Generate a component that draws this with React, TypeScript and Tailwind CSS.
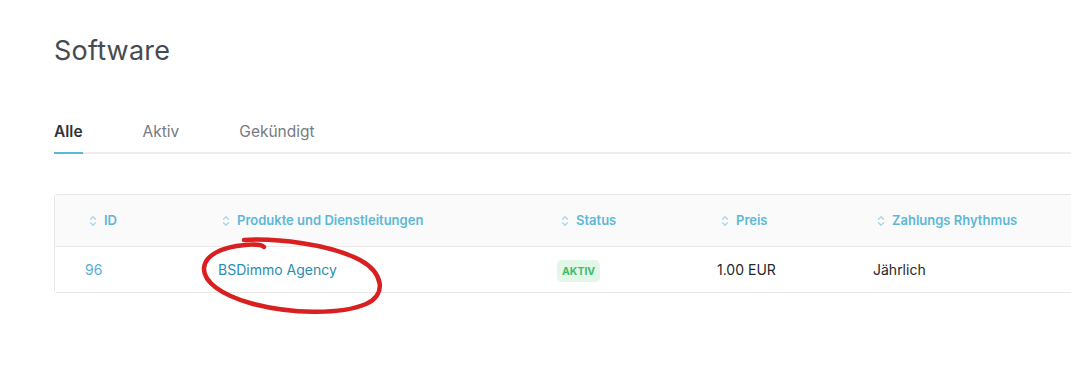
import React from "react";

const SortIcon = () => (
  <svg width="8" height="12" viewBox="0 0 8 12" fill="none" className="shrink-0">
    <path d="M1.5 4.2 L4 1.8 L6.5 4.2" stroke="#a9d6e8" strokeWidth="1.3" strokeLinecap="round" strokeLinejoin="round" />
    <path d="M1.5 7.8 L4 10.2 L6.5 7.8" stroke="#a9d6e8" strokeWidth="1.3" strokeLinecap="round" strokeLinejoin="round" />
  </svg>
);

const cols = [
  { label: "ID", w: "w-[133px]" },
  { label: "Produkte und Dienstleitungen", w: "w-[339px]" },
  { label: "Status", w: "w-[160px]" },
  { label: "Preis", w: "w-[156px]" },
  { label: "Zahlungs Rhythmus", w: "w-[300px]" },
];

export default function App() {
  return (
    <div
      className="relative w-[1071px] h-[384px] overflow-hidden bg-white"
      style={{ fontFamily: "Inter, 'Noto Sans', sans-serif" }}
    >
      <div className="pl-[54px] pt-[33px] w-[1200px]">
        <h1 className="text-[27px] leading-[36px] text-[#474a4f] font-normal tracking-[0.2px]">Software</h1>

        <div className="mt-[48px] flex border-b-2 border-[#eeeeee] h-[37px]">
          <div className="relative text-[15.5px] font-semibold text-[#2f3238] pt-[3px]">
            Alle
            <div className="absolute left-0 right-0 bottom-[-2px] h-[2px] bg-[#5bb9d8]" />
          </div>
          <div className="ml-[60px] text-[15.5px] text-[#777a80] pt-[3px]">Aktiv</div>
          <div className="ml-[60px] text-[15.5px] text-[#777a80] pt-[3px]">Gekündigt</div>
        </div>

        <div className="mt-[40px] border border-[#e6e6e6] rounded-[3px]">
          <div className="flex h-[52px] items-center bg-[#fafafa] border-b border-[#e9e9e9]">
            {cols.map((c) => (
              <div key={c.label} className={`${c.w} shrink-0 pl-[34px] flex items-center gap-[7px]`}>
                <SortIcon />
                <span className="text-[13px] font-semibold text-[#5db8d7]">{c.label}</span>
              </div>
            ))}
          </div>
          <div className="flex h-[45px] items-center bg-white">
            <div className="w-[133px] shrink-0 pl-[30px] text-[14px] text-[#5aaed4]">96</div>
            <div className="w-[339px] shrink-0 pl-[30px] text-[14px] text-[#2a8db3]">BSDimmo Agency</div>
            <div className="w-[160px] shrink-0 pl-[30px]">
              <span className="inline-flex h-[22px] items-center rounded-[5px] bg-[#e2f7e8] px-[5px] text-[10.5px] font-bold text-[#3dbd69]">AKTIV</span>
            </div>
            <div className="w-[156px] shrink-0 pl-[30px] text-[14px] text-[#25272b]">1.00 EUR</div>
            <div className="w-[300px] shrink-0 pl-[30px] text-[14px] text-[#25272b]">Jährlich</div>
          </div>
        </div>
      </div>

      <svg className="absolute left-0 top-0 pointer-events-none" width="1071" height="384" viewBox="0 0 1071 384" fill="none">
        <path
          d="M244 240 C 275 238, 330 244, 360 260 C 382 272, 388 294, 366 304 C 340 315, 290 314, 250 303 C 222 295, 203 282, 204 268 C 205 255, 222 247, 245 245 C 254 244, 262 245, 264 247"
          stroke="#d91f1f"
          strokeWidth="4.5"
          strokeLinecap="round"
          strokeLinejoin="round"
        />
      </svg>
    </div>
  );
}
